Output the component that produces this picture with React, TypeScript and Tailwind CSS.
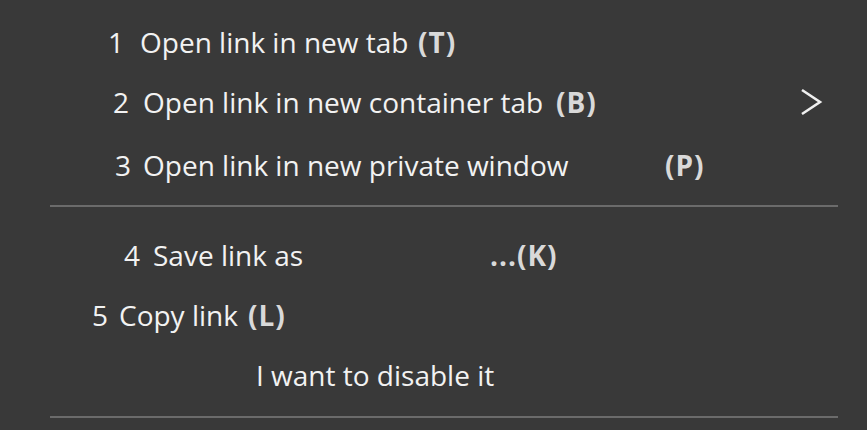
type Item = {
  num?: string;
  numX: number;
  textX: number;
  keyX?: number;
  label: string;
  keyLabel?: string;
  submenu?: boolean;
  h: string;
};

const top: Item[] = [
  { num: '1', numX: 108, textX: 140, keyX: 418, label: 'Open link in new tab', keyLabel: '(T)', h: 'h-[60px]' },
  { num: '2', numX: 113, textX: 143, keyX: 556, label: 'Open link in new container tab', keyLabel: '(B)', submenu: true, h: 'h-[60px]' },
  { num: '3', numX: 115, textX: 143, keyX: 665, label: 'Open link in new private window', keyLabel: '(P)', h: 'h-[66px]' },
];

const bottom: Item[] = [
  { num: '4', numX: 124, textX: 153, keyX: 490, label: 'Save link as', keyLabel: '...(K)', h: 'h-[60px]' },
  { num: '5', numX: 92, textX: 119, keyX: 248, label: 'Copy link', keyLabel: '(L)', h: 'h-[60px]' },
  { numX: 256, textX: 256, label: 'I want to disable it', h: 'h-[60px]' },
];

function Row({ item }: { item: Item }) {
  return (
    <div className={`${item.h} flex items-center pr-[44px]`}>
      <div style={{ width: item.numX }} className="shrink-0" />
      {item.num && (
        <span style={{ width: item.textX - item.numX }} className="shrink-0">
          {item.num}
        </span>
      )}
      <span
        style={item.keyX ? { width: item.keyX - item.textX } : undefined}
        className="shrink-0 whitespace-nowrap"
      >
        {item.label}
      </span>
      {item.keyLabel && (
        <span className="font-bold text-[#d9d9d9] tracking-[1px] whitespace-nowrap">{item.keyLabel}</span>
      )}
      {item.submenu && (
        <svg className="ml-auto" width="24" height="28" viewBox="0 0 24 28" fill="none">
          <path d="M3 2 L21 14 L3 26" stroke="#f0f0f0" strokeWidth="2.6" strokeLinejoin="miter" />
        </svg>
      )}
    </div>
  );
}

export default function App() {
  return (
    <div
      className="w-[867px] h-[430px] overflow-hidden bg-[#393939] text-[#f2f2f2] text-[28px] pt-[12px]"
      style={{ fontFamily: '"Open Sans", "Noto Sans", sans-serif' }}
    >
      {top.map((it) => (
        <Row key={it.label} item={it} />
      ))}
      <div className="mx-[50px] w-[788px] mt-[7px] h-[2px] bg-[#6b6b6b]" />
      <div className="h-[18px]" />
      {bottom.map((it) => (
        <Row key={it.label} item={it} />
      ))}
      <div className="mx-[50px] w-[788px] mt-[11px] h-[2px] bg-[#6b6b6b]" />
    </div>
  );
}
